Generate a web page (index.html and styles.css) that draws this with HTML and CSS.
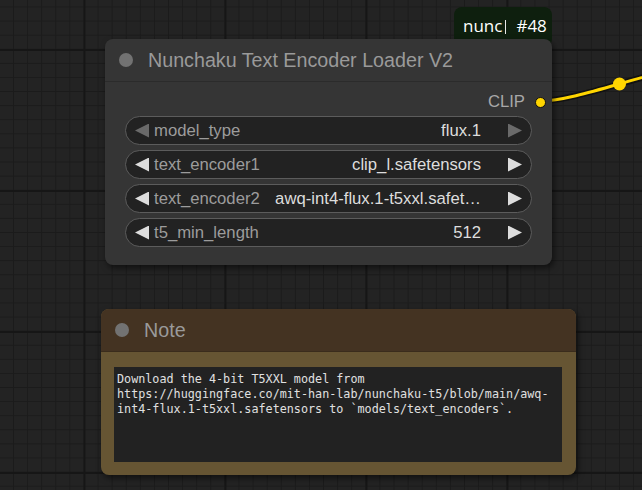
FILE: index.html
```html
<!DOCTYPE html>
<html>
<head>
<meta charset="utf-8">
<link rel="stylesheet" href="styles.css">
</head>
<body>
<div class="canvas">
  <div class="badge"><span class="badge-src">nunc</span><span class="badge-cut"></span><span class="badge-id">#48</span></div>

  <svg class="links" width="642" height="490" viewBox="0 0 642 490">
    <path d="M540 101 C580 101 658 67 698 67" fill="none" stroke="#111" stroke-width="6.5"/>
    <path d="M540 101 C580 101 658 67 698 67" fill="none" stroke="#ffd500" stroke-width="3"/>
    <circle cx="619.5" cy="84" r="6.5" fill="#ffd500"/>
  </svg>

  <div class="node loader">
    <div class="node-title">
      <span class="node-dot"></span>
      <span class="node-name">Nunchaku Text Encoder Loader V2</span>
    </div>
    <div class="node-body">
      <div class="output">
        <span class="output-name">CLIP</span>
        <span class="slot"></span>
      </div>
      <div class="widgets">
        <div class="widget disabled">
          <span class="arrow left"></span>
          <span class="label">model_type</span>
          <span class="value">flux.1</span>
          <span class="arrow right"></span>
        </div>
        <div class="widget">
          <span class="arrow left"></span>
          <span class="label">text_encoder1</span>
          <span class="value">clip_l.safetensors</span>
          <span class="arrow right"></span>
        </div>
        <div class="widget">
          <span class="arrow left"></span>
          <span class="label">text_encoder2</span>
          <span class="value">awq-int4-flux.1-t5xxl.safet…</span>
          <span class="arrow right"></span>
        </div>
        <div class="widget">
          <span class="arrow left"></span>
          <span class="label">t5_min_length</span>
          <span class="value">512</span>
          <span class="arrow right"></span>
        </div>
      </div>
    </div>
  </div>

  <div class="node note">
    <div class="node-title note-title">
      <span class="node-dot"></span>
      <span class="node-name">Note</span>
    </div>
    <div class="note-body">
      <div class="note-text">Download the 4-bit T5XXL model from<br>https://huggingface.co/mit-han-lab/nunchaku-t5/blob/main/awq-<br>int4-flux.1-t5xxl.safetensors to `models/text_encoders`.</div>
    </div>
  </div>
</div>
</body>
</html>
```

FILE: styles.css
```css
html, body {
  margin: 0;
  padding: 0;
}

body {
  width: 642px;
  height: 490px;
  overflow: hidden;
  font-family: "Liberation Sans", Arial, sans-serif;
}

.canvas {
  position: relative;
  width: 642px;
  height: 490px;
  overflow: hidden;
  background-color: #232323;
  background-image:
    linear-gradient(to right, #161616 2px, transparent 2px),
    linear-gradient(to bottom, #161616 2px, transparent 2px),
    linear-gradient(to right, #1b1b1b 1px, transparent 1px),
    linear-gradient(to bottom, #1b1b1b 1px, transparent 1px);
  background-size: 141px 141px, 141px 141px, 14.1px 14.1px, 14.1px 14.1px;
  background-position: 83.5px 0, 0 49px, 13px 0, 0 6.5px;
}

.links {
  position: absolute;
  left: 0;
  top: 0;
  z-index: 1;
}

.badge {
  position: absolute;
  left: 454px;
  top: 7px;
  width: 98px;
  height: 40px;
  box-sizing: border-box;
  background: #0e1f0e;
  border-radius: 8px;
  display: flex;
  align-items: flex-start;
  padding: 8px 0 0 9px;
  font-family: "Open Sans", "Noto Sans", sans-serif;
  font-size: 17px;
  font-weight: 500;
  color: #ffffff;
  z-index: 1;
}

.badge-src {
  white-space: nowrap;
  line-height: 22px;
}

.badge-cut {
  width: 1px;
  height: 14px;
  margin: 5px 0 0 3px;
  background: #e8e8e8;
}

.badge-id {
  margin-left: 10px;
  line-height: 22px;
}

.node {
  position: absolute;
  z-index: 2;
  border-radius: 8px;
  box-shadow: 2px 3px 6px rgba(0, 0, 0, 0.55);
  display: flex;
  flex-direction: column;
}

.loader {
  left: 105px;
  top: 39px;
  width: 447px;
  height: 226px;
  background: #353535;
}

.node-title {
  height: 42px;
  display: flex;
  align-items: center;
  padding-left: 14px;
  gap: 15px;
  border-bottom: 1px solid #2b2b2b;
  border-radius: 8px 8px 0 0;
}

.node-dot {
  width: 14px;
  height: 14px;
  border-radius: 50%;
  background: #727272;
  flex: none;
}

.node-name {
  font-size: 19.7px;
  color: #9a9a9a;
  white-space: nowrap;
}

.node-body {
  padding: 10px 20px 0 20px;
  display: flex;
  flex-direction: column;
  gap: 4px;
}

.output {
  height: 20px;
  display: flex;
  justify-content: flex-end;
  align-items: center;
  gap: 10px;
  margin-right: -14px;
}

.output-name {
  font-size: 16.7px;
  color: #a8a8a8;
}

.slot {
  width: 9px;
  height: 9px;
  border-radius: 50%;
  background: #ffd500;
  border: 1.5px solid #111;
}

.widgets {
  display: flex;
  flex-direction: column;
  gap: 5px;
}

.widget {
  height: 29px;
  box-sizing: border-box;
  border: 1px solid #5c5c5c;
  border-radius: 15px;
  background: #222222;
  display: flex;
  align-items: center;
  padding: 0 9px 0 9px;
  font-size: 16.7px;
}

.arrow {
  width: 14px;
  height: 14px;
  background: #dddddd;
  flex: none;
}

.arrow.left {
  clip-path: polygon(100% 0, 0 50%, 100% 100%);
}

.arrow.right {
  clip-path: polygon(0 0, 100% 50%, 0 100%);
}

.widget.disabled .arrow {
  background: #6a6a6a;
}

.label {
  margin-left: 5px;
  color: #9c9c9c;
  white-space: nowrap;
}

.value {
  margin-left: auto;
  margin-right: 27px;
  color: #dddddd;
  white-space: nowrap;
  padding-left: 12px;
}

.note {
  left: 101px;
  top: 309px;
  width: 475px;
  height: 166px;
  background: #665533;
}

.note-title {
  background: #443322;
  border-bottom: 1px solid #3a2c1c;
}

.note-body {
  flex: 1;
  padding: 15px 14px 13px 13px;
  display: flex;
}

.note-text {
  flex: 1;
  background: #222222;
  padding: 5px 3px 0 3px;
  font-family: "DejaVu Sans Mono", "Liberation Mono", monospace;
  font-size: 11.75px;
  line-height: 15.2px;
  color: #e0e0e0;
  white-space: nowrap;
}
```
